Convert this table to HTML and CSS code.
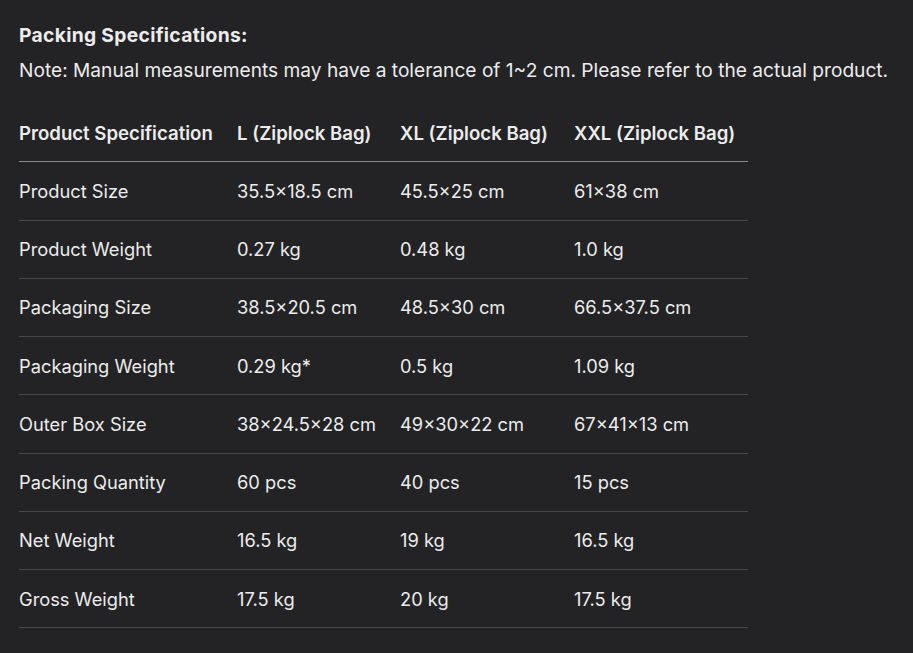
FILE: index.html
```html
<!DOCTYPE html>
<html>
<head>
<meta charset="utf-8">
<link rel="stylesheet" href="styles.css">
</head>
<body>
<div class="content">
  <p class="title"><strong>Packing Specifications:</strong></p>
  <p class="note">Note: Manual measurements may have a tolerance of 1~2 cm. Please refer to the actual product.</p>
  <table class="spec">
    <colgroup>
      <col class="c1"><col class="c2"><col class="c3"><col class="c4">
    </colgroup>
    <thead>
      <tr><th>Product Specification</th><th>L (Ziplock Bag)</th><th>XL (Ziplock Bag)</th><th>XXL (Ziplock Bag)</th></tr>
    </thead>
    <tbody>
      <tr><td>Product Size</td><td>35.5×18.5 cm</td><td>45.5×25 cm</td><td>61×38 cm</td></tr>
      <tr><td>Product Weight</td><td>0.27 kg</td><td>0.48 kg</td><td>1.0 kg</td></tr>
      <tr><td>Packaging Size</td><td>38.5×20.5 cm</td><td>48.5×30 cm</td><td>66.5×37.5 cm</td></tr>
      <tr><td>Packaging Weight</td><td>0.29 kg*</td><td>0.5 kg</td><td>1.09 kg</td></tr>
      <tr><td>Outer Box Size</td><td>38×24.5×28 cm</td><td>49×30×22 cm</td><td>67×41×13 cm</td></tr>
      <tr><td>Packing Quantity</td><td>60 pcs</td><td>40 pcs</td><td>15 pcs</td></tr>
      <tr><td>Net Weight</td><td>16.5 kg</td><td>19 kg</td><td>16.5 kg</td></tr>
      <tr><td>Gross Weight</td><td>17.5 kg</td><td>20 kg</td><td>17.5 kg</td></tr>
    </tbody>
  </table>
</div>
</body>
</html>
```
FILE: styles.css
```css
html, body {
  margin: 0;
  padding: 0;
  background: #232325;
}
body {
  color: #ececec;
  font-family: Inter, "Noto Sans", sans-serif;
  font-size: 19px;
}
.content {
  padding: 20px 19px 0;
}
.title {
  margin: 0;
  line-height: 30px;
}
.title strong {
  font-weight: 700;
  font-size: 19.3px;
  letter-spacing: 0.3px;
}
.note {
  margin: 4px 0 0;
  line-height: 30px;
  font-size: 19.15px;
}
.spec {
  margin-top: 19px;
  border-collapse: collapse;
  table-layout: fixed;
  width: 729px;
}
.c1 { width: 218px; }
.c2 { width: 163px; }
.c3 { width: 174px; }
.c4 { width: 174px; }
.spec th, .spec td {
  padding: 14.625px 0;
  line-height: 28px;
  text-align: left;
  vertical-align: middle;
  white-space: nowrap;
}
.spec th {
  font-size: 18.6px;
  font-weight: 600;
  border-bottom: 1px solid #8a8a8c;
}
.spec td {
  font-size: 18.3px;
  font-weight: 400;
  border-bottom: 1px solid #48484a;
}
```
